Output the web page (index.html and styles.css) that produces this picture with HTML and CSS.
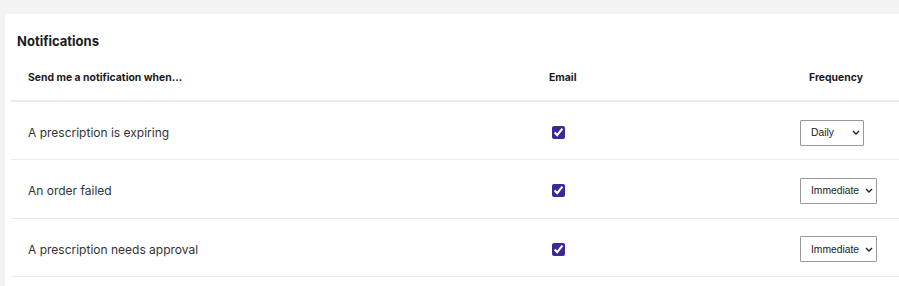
FILE: index.html
```html
<!DOCTYPE html>
<html lang="en">
<head>
  <meta charset="UTF-8">
  <meta name="viewport" content="width=device-width, initial-scale=1.0">
  <title>Notifications</title>
  <link rel="stylesheet" href="styles.css">
</head>
<body>

  <div class="card">
    <h2 class="card-title">Notifications</h2>

    <div class="settings">
      <div class="row head">
        <div class="cell what">Send me a notification when...</div>
        <div class="cell email">Email</div>
        <div class="cell freq">Frequency</div>
      </div>

      <div class="row">
        <div class="cell what">A prescription is expiring</div>
        <div class="cell email"><input type="checkbox" checked></div>
        <div class="cell freq">
          <select class="short">
            <option>Daily</option>
            <option>Weekly</option>
          </select>
        </div>
      </div>

      <div class="row">
        <div class="cell what">An order failed</div>
        <div class="cell email"><input type="checkbox" checked></div>
        <div class="cell freq">
          <select class="long">
            <option>Immediate</option>
            <option>Daily</option>
          </select>
        </div>
      </div>

      <div class="row">
        <div class="cell what">A prescription needs approval</div>
        <div class="cell email"><input type="checkbox" checked></div>
        <div class="cell freq">
          <select class="long">
            <option>Immediate</option>
            <option>Daily</option>
          </select>
        </div>
      </div>
    </div>
  </div>

</body>
</html>
```

FILE: styles.css
```css
* { box-sizing: border-box; margin: 0; padding: 0; }
html, body { overflow: hidden; }
body { background: #f3f3f3; font-family: Inter, 'Noto Sans', sans-serif; color: #222; padding: 14px 0 0 5px; }

.card { background: white; border-radius: 4px 0 0 0; width: calc(100% + 20px); padding: 19px 0 10px 6px; }
.card-title { font-size: 13px; font-weight: 700; line-height: 17px; padding-left: 6px; color: #1c1c1c; }

.row { display: grid; grid-template-columns: 537px 252px 1fr; align-items: center; height: 58.3px; border-bottom: 1.5px solid #ebebeb; font-size: 12px; color: #333; }
.row.head { height: 52px; font-size: 10.4px; font-weight: 700; color: #1c1c1c; border-bottom-width: 2px; }
.cell.what { padding-left: 17px; padding-top: 4px; }
.row.head .cell { padding-top: 4px; }
.row.head .email { padding-left: 1px; }
.row.head .freq { padding-left: 9px; }
.email { padding-top: 4px; }
.freq { padding-top: 4px; }

input[type=checkbox] { width: 13px; height: 13px; margin: 0 0 0 4px; accent-color: #3b2a96; display: block; }

select { appearance: none; -webkit-appearance: none; font-family: 'Liberation Sans', Arial, sans-serif; font-size: 10.3px; color: #222; height: 26px; padding: 0 0 0 10px; border: 1px solid #9a9a9a; border-radius: 1px; background: white url("data:image/svg+xml,%3Csvg xmlns='http://www.w3.org/2000/svg' width='8' height='5' viewBox='0 0 8 5'%3E%3Cpath d='M1 1l3 3 3-3' fill='none' stroke='%23222' stroke-width='1.4'/%3E%3C/svg%3E") no-repeat right 3px center; display: block; }
select.short { width: 64px; }
select.long { width: 77px; }
```
